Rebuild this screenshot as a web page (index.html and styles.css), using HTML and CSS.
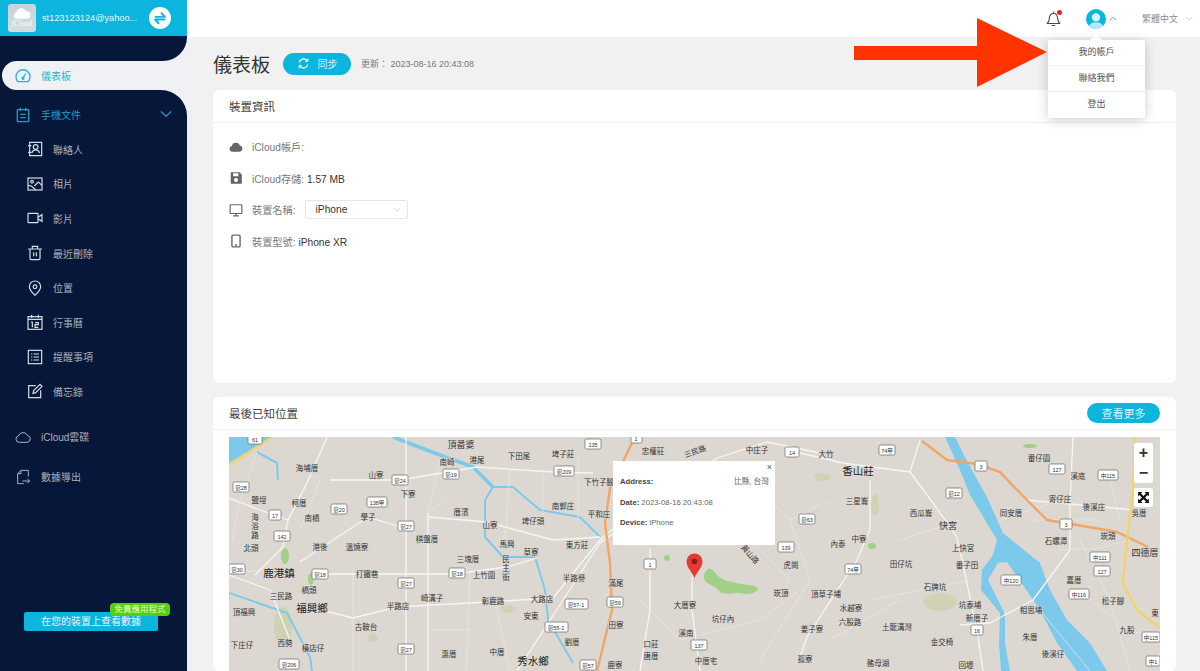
FILE: index.html
```html
<!DOCTYPE html>
<html lang="zh-Hant">
<head>
    <meta charset="UTF-8">
    <meta name="viewport" content="width=device-width, initial-scale=1.0">
    <title>儀表板</title>
    <link rel="stylesheet" href="styles.css">
</head>
<body>
<div class="app">
    <!-- left navigation -->
    <aside class="sidebar">
        <div class="account">
            <div class="logo">
                <svg viewBox="0 0 24 14" class="logo-cloud"><path d="M6 13a4 4 0 0 1-.6-7.9A6 6 0 0 1 16.8 4 4.6 4.6 0 0 1 18.6 13z" fill="#fff"/></svg>
                <span class="logo-text">iCloud</span>
            </div>
            <span class="account-mail">st123123124@yahoo...</span>
            <span class="swap">
                <svg viewBox="0 0 24 24" fill="none" stroke="#0bb5de" stroke-width="2.6" stroke-linejoin="round" stroke-linecap="round"><path d="M6 10.5h12.5L14 5.5"/><path d="M18 14H5.5l4.5 5"/></svg>
            </span>
        </div>
        <div class="nav-top"></div>
        <div class="nav-active-wrap">
            <a class="nav-active">
                <svg class="icon" viewBox="0 0 24 24" fill="none" stroke="currentColor" stroke-width="2"><path d="M4.5 20.5A10.5 10.5 0 1 1 19.5 20.5z" stroke-linejoin="round"/><path d="M12 15l3.5-6" stroke-linecap="round"/><circle cx="12" cy="15.5" r="1.5" fill="currentColor"/></svg>
                儀表板
            </a>
        </div>
        <nav class="nav">
            <a class="nav-group">
                <svg class="icon" viewBox="0 0 24 24" fill="none" stroke="currentColor" stroke-width="2"><rect x="3.5" y="4" width="17" height="18" rx="1"/><path d="M8 1v5M16 1v5M8 11h8M8 16h8"/></svg>
                手機文件
                <svg class="chevron" viewBox="0 0 12 8" fill="none" stroke="currentColor" stroke-width="1.2"><path d="M1 1.5l5 5 5-5"/></svg>
            </a>
            <a class="nav-sub">
                <svg class="icon" viewBox="0 0 24 24" fill="none" stroke="currentColor" stroke-width="1.8"><path d="M4 2h18v20H4zM1.5 7h5M1.5 17h5"/><circle cx="13" cy="9" r="3.5"/><path d="M7 18c1-3.5 3-4.5 6-4.5s5 1 6 4.5"/></svg>
                聯絡人
            </a>
            <a class="nav-sub">
                <svg class="icon" viewBox="0 0 24 24" fill="none" stroke="currentColor" stroke-width="1.8"><rect x="1.5" y="3" width="21" height="18"/><circle cx="7.5" cy="8.5" r="2"/><path d="M1.5 14l5 1 7 6M11 15l6-6 5.5 5"/></svg>
                相片
            </a>
            <a class="nav-sub">
                <svg class="icon" viewBox="0 0 24 24" fill="none" stroke="currentColor" stroke-width="1.8"><rect x="1.5" y="5" width="15" height="14" rx="1"/><path d="M16.5 11l6-4v10l-6-4"/></svg>
                影片
            </a>
            <a class="nav-sub">
                <svg class="icon" viewBox="0 0 24 24" fill="none" stroke="currentColor" stroke-width="1.8"><path d="M1.5 6h21M8 6V2h8v4M4.5 6v14a2 2 0 0 0 2 2h11a2 2 0 0 0 2-2V6M10 11v6M14 11v6"/></svg>
                最近刪除
            </a>
            <a class="nav-sub">
                <svg class="icon" viewBox="0 0 24 24" fill="none" stroke="currentColor" stroke-width="1.8"><path d="M12 23C7 18 3.5 14 3.5 10a8.5 8.5 0 0 1 17 0c0 4-3.5 8-8.5 13z"/><circle cx="12" cy="10" r="2.8"/></svg>
                位置
            </a>
            <a class="nav-sub">
                <svg class="icon" viewBox="0 0 24 24" fill="none" stroke="currentColor" stroke-width="1.8"><rect x="1.5" y="4" width="21" height="19"/><path d="M7 1v5M17 1v5M1.5 8h21"/><path d="M6 12h2v8M12 13h5v3h-5v4h5"/></svg>
                行事曆
            </a>
            <a class="nav-sub">
                <svg class="icon" viewBox="0 0 24 24" fill="none" stroke="currentColor" stroke-width="1.8"><rect x="2" y="2" width="20" height="20"/><path d="M10 7.5h8M10 12h8M10 16.5h8M6 7.5h2M6 12h2M6 16.5h2"/></svg>
                提醒事項
            </a>
            <a class="nav-sub">
                <svg class="icon" viewBox="0 0 24 24" fill="none" stroke="currentColor" stroke-width="1.8"><path d="M13 4H2.5v18h18V11"/><path d="M9 15.5l1-4L19.5 2l3 3-9.5 9.5z"/></svg>
                備忘錄
            </a>
            <a class="nav-item nav-cloud">
                <svg class="icon" viewBox="0 0 24 24" fill="none" stroke="currentColor" stroke-width="1.5"><path d="M6.5 20a5 5 0 0 1-1-9.9A7 7 0 0 1 18.5 9.5 5.3 5.3 0 0 1 18 20z"/></svg>
                iCloud雲碟
            </a>
            <a class="nav-item">
                <svg class="icon" viewBox="0 0 24 24" fill="none" stroke="currentColor" stroke-width="1.5"><path d="M20 11V2H9L4 7v15h9M9 2v5H4"/><path d="M11 18h11M18.5 14.5L22 18l-3.5 3.5"/></svg>
                數據導出
            </a>
            <div class="promo">
                <span class="promo-badge">免費應用程式</span>
                <a class="promo-btn">在您的裝置上查看數據</a>
            </div>
        </nav>
    </aside>

    <div class="content">
        <header class="topbar">
            <span class="bell">
                <svg viewBox="0 0 24 24" fill="none" stroke="#4a4a4a" stroke-width="1.5"><path d="M3 19c2-1.5 2.8-3 3-6.5C6.3 7.5 8.5 5 12 5s5.700 2.500 6 7.500c.2 3.500 1 5 3 6.500z" stroke-linejoin="round"/><path d="M9.5 22h5M12 2v3"/></svg>
                <i class="bell-dot"></i>
            </span>
            <span class="avatar">
                <svg viewBox="0 0 24 24"><circle cx="12" cy="12" r="12" fill="#0bb5de"/><circle cx="12" cy="10" r="5" fill="#d9f3fa"/><path d="M3.5 20.500c2-3.500 5-4.500 8.500-4.500s6.500 1 8.500 4.500A12 12 0 0 1 3.500 20.500z" fill="#b5e8f5"/></svg>
            </span>
            <svg class="caret-up" viewBox="0 0 12 8" fill="none" stroke="#0bb5de" stroke-width="1.1"><path d="M1 6.5l5-5 5 5"/></svg>
            <span class="lang">繁體中文</span>
            <svg class="caret-down" viewBox="0 0 12 8" fill="none" stroke="#c4c4c4" stroke-width="1.1"><path d="M1 1.5l5 5 5-5"/></svg>
        </header>

        <main class="page">
            <div class="page-head">
                <h1>儀表板</h1>
                <button class="sync">
                    <svg viewBox="0 0 24 24" fill="none" stroke="#fff" stroke-width="2.4"><path d="M4 10a8.500 8.500 0 0 1 15-3M20 14a8.500 8.500 0 0 1-15 3"/><path d="M20 3v5h-5M4 21v-5h5" stroke-width="1.8"/></svg>
                    同步
                </button>
                <span class="updated">更新： 2023-08-16 20:43:08</span>
            </div>

            <section class="card card-device">
                <h2 class="card-title">裝置資訊</h2>
                <div class="device-rows">
                    <div class="device-row">
                        <svg class="row-icon" viewBox="0 0 24 24" fill="#666"><path d="M6 20a5 5 0 0 1-1-9.9A7 7 0 0 1 18.5 9.5 5.3 5.3 0 0 1 18 20z"/></svg>
                        <span>iCloud帳戶:</span>
                    </div>
                    <div class="device-row">
                        <svg class="row-icon" viewBox="0 0 24 24" fill="#666"><path d="M3 2h15l4 4v16H3zM7 4v5h9V4zM12 12a3.5 3.5 0 1 0 0 7 3.5 3.5 0 0 0 0-7z" fill-rule="evenodd"/></svg>
                        <span>iCloud存儲: <b>1.57 MB</b></span>
                    </div>
                    <div class="device-row">
                        <svg class="row-icon" viewBox="0 0 24 24" fill="none" stroke="#666" stroke-width="2"><rect x="2" y="3" width="20" height="15" rx="1"/><path d="M12 18v4M7 22h10"/></svg>
                        <span>裝置名稱:</span>
                        <span class="select">iPhone
                            <svg viewBox="0 0 12 8" fill="none" stroke="#c8c8c8"><path d="M1 1.5l5 5 5-5"/></svg>
                        </span>
                    </div>
                    <div class="device-row">
                        <svg class="row-icon" viewBox="0 0 24 24" fill="none" stroke="#666" stroke-width="2.4"><rect x="5" y="2" width="14" height="20" rx="2"/><path d="M10 19h4"/></svg>
                        <span>裝置型號: <b>iPhone XR</b></span>
                    </div>
                </div>
            </section>

            <section class="card card-map">
                <div class="card-title map-title">
                    最後已知位置
                    <button class="more">查看更多</button>
                </div>
                <div class="map">
                    <svg class="map-canvas" viewBox="229 437 931 234" preserveAspectRatio="xMinYMin slice">
                        <!-- farmland patches -->
                        <g class="parks">
                            <ellipse cx="940" cy="602" rx="17" ry="9"/>
                            <ellipse cx="283" cy="627" rx="9" ry="20"/>
                            <ellipse cx="285" cy="556" rx="4" ry="8" class="bright"/>
                            <ellipse cx="311" cy="579" rx="3" ry="6" class="bright"/>
                            <ellipse cx="508" cy="609" rx="8" ry="4"/>
                            <ellipse cx="373" cy="638" rx="5" ry="4"/>
                            <ellipse cx="875" cy="505" rx="4" ry="11"/>
                            <ellipse cx="822" cy="477" rx="8" ry="4"/>
                            <ellipse cx="1030" cy="446" rx="7" ry="2" class="bright"/>
                            <ellipse cx="872" cy="546" rx="4" ry="3" class="bright"/>
                            <ellipse cx="667" cy="558" rx="3" ry="3" class="bright"/>
                            <path class="bright" d="M708 569C704 572 702 578 706 582 711 586 716 586 720 592 728 596 736 591 745 594 752 594 758 592 758 588 752 584 742 585 733 582 726 582 720 578 716 574 714 571 711 568 708 569Z"/>
                        </g>
                        <!-- water -->
                        <path class="water" d="M229 437H273Q250 450 229 463Z"/>
                        <path class="water" d="M945 437L960 470 970 495 997 540 993 555 982 570 981 590 1000 613 999 643 1001 671H1010L1005 643 1004 612 988 580 998 563 1007 562 1040 610 1057 643 1077 671H1107L1090 643 1067 620 1050 590 1040 563 1003 533 987 497 970 467 955 437Z"/>
                        <g class="canal">
                            <path class="canal-wide" d="M393 437L440 455 473 467 493 487"/>
                            <path d="M493 487H513L540 510 580 517 600 537"/>
                            <path d="M493 487L485 500V537L503 557H535L545 590 548 620 573 663"/>
                            <path d="M229 593L287 613 310 657 312 671"/>
                            <path d="M257 452L277 463 278 480"/>
                            <path d="M1004 615V671"/>
                        </g>
                        <!-- roads -->
                        <g class="roads-minor">
                            <path d="M229 574L260 570 290 572M320 480L300 530M257 452L240 500 232 540"/>
                            <path d="M353 574V671M470 574L466 671M495 602L510 671M428 630H470"/>
                            <path d="M445 500L428 513 440 460M543 517V470M510 470L505 540M578 456V520"/>
                            <path d="M640 470L680 490 730 520 790 580M640 600L680 640 760 620 800 590M620 640L650 671"/>
                            <path d="M740 470L790 520 830 500M790 520L810 580 760 660"/>
                            <path d="M870 600L920 590 970 580M830 640L900 600M900 540L960 520M1000 520L1060 500"/>
                            <path d="M1110 480L1120 520M1080 540L1110 600 1130 671M1090 600L1130 630 1160 640"/>
                            <path d="M1057 550L1100 548 1130 540M1027 520L1100 520M1040 610L1090 671"/>
                        </g>
                        <g class="roads">
                            <path d="M229 498L260 510 288 520 307 483 327 437"/>
                            <path d="M288 520L283 547 255 575M368 517L300 562"/>
                            <path d="M313 608L353 618 397 607 487 602 553 598 600 540 620 523"/>
                            <path d="M320 574H453L507 567 537 558"/>
                            <path d="M406 437V671M428 513V671"/>
                            <path d="M368 517L400 527M428 517L487 522 553 540 600 537"/>
                            <path d="M330 480H400L477 467 553 472 593 473"/>
                            <path d="M517 671L600 543 717 458 767 442 820 453"/>
                            <path d="M800 453L843 463 910 472 933 503 957 537 977 630 983 671"/>
                            <path d="M920 440L910 472"/>
                            <path d="M870 480V530L857 560 807 637 800 657"/>
                            <path d="M692 577V610L700 671"/>
                            <path d="M1073 437L1070 503V550L1033 600 990 623 960 625"/>
                            <path d="M1027 500L1133 510M650 548L650 610 640 671"/>
                            <path d="M229 575L270 590 290 640"/>
                        </g>
                        <path class="highway" d="M640 437L632 443 610 488 605 523 610 563 612 610 597 671"/>
                        <path class="highway" d="M922 441L947 460 977 464 1000 472 1020 493 1047 520 1077 525 1117 532 1148 547"/>
                        <path class="expressway" d="M1135 437L1133 490 1128 530 1123 583 1137 610 1160 628"/>
                        <path class="expressway thin" d="M229 465L260 445 272 437"/>

                        <!-- place names -->
                        <g class="places">
                            <text x="461" y="448" class="big">頂番婆</text><text x="519" y="459">下田尾</text><text x="563" y="457">埤子莊</text><text x="447" y="465">南崎</text><text x="477" y="463">港尾</text><text x="307" y="471">海埔厝</text><text x="376" y="478">山寮</text><text x="599" y="485">下竹子腳</text><text x="408" y="497">下寮</text><text x="259" y="503">鹽埕</text><text x="299" y="506">柯厝</text><text x="312" y="521">南橋</text><text x="368" y="520">學子</text><text x="461" y="515">厝濱</text><text x="563" y="509">南郭庄</text><text x="599" y="517">平和庄</text><text x="490" y="528">山寮</text><text x="533" y="524">埤仔頭</text><text x="427" y="542">棋盤厝</text><text x="320" y="550">港後</text><text x="357" y="550">溫燒寮</text><text x="507" y="547">馬興</text><text x="577" y="548">東方莊</text><text x="251" y="551">北頭</text><text x="531" y="555">草寮</text><text x="468" y="562">三塊厝</text>
                            <text x="279" y="577" class="town">鹿港鎮</text><text x="367" y="577">打鐵巷</text><text x="484" y="578">上竹圍</text><text x="574" y="581">半路譽</text><text x="309" y="593">橋頭</text><text x="281" y="599">三民路</text><text x="432" y="601">崎溝子</text><text x="542" y="602">大路店</text><text x="493" y="604">彰鹿路</text><text x="398" y="609">半路店</text><text x="312" y="612" class="town">福興鄉</text><text x="244" y="615">頂福興</text><text x="531" y="619">安東</text><text x="366" y="630">古鞍台</text><text x="572" y="645">劉厝</text><text x="242" y="648">下庄仔</text><text x="285" y="646">西勢</text><text x="313" y="651">橫店仔</text><text x="497" y="655">中厝</text><text x="449" y="657">惠厝</text><text x="533" y="665" class="town">秀水鄉</text><text x="615" y="668">鹿寮</text>
                            <text x="255" y="520">海</text><text x="255" y="529">浴</text><text x="255" y="538">路</text><text x="506" y="562">民</text><text x="506" y="571">主</text><text x="506" y="580">街</text>
                            <text x="653" y="454">忠權莊</text><text x="757" y="453">中庄子</text><text x="791" y="568">虎崗</text><text x="616" y="586">滿尾</text><text x="685" y="608">大厝寮</text><text x="781" y="596">崁頂</text><text x="616" y="628">田寮</text><text x="723" y="622">坑仔內</text><text x="686" y="636">溪南</text><text x="651" y="647">口莊</text><text x="651" y="659">唐厝</text><text x="706" y="664">中厝宅</text>
                            <text transform="translate(696 454) rotate(-20)">三民路</text><text transform="translate(748 556) rotate(50)">黃山路</text>
                            <text x="826" y="457">大竹</text><text x="858" y="475" class="town">香山莊</text><text x="1039" y="461">番仔園</text><text x="1078" y="479">溪底</text><text x="857" y="504">三星崙</text><text x="921" y="516">西瓜崙</text><text x="1060" y="502">寄仔庄</text><text x="1094" y="510">後溪庄</text><text x="1011" y="516">同安厝</text><text x="1139" y="516">吳厝</text><text x="948" y="529" class="big">快宮</text><text x="1108" y="539">崁頭</text><text x="1056" y="544">石螺潭</text><text x="838" y="547">內泰</text><text x="859" y="542">中寮</text><text x="963" y="551">上快宮</text><text x="1145" y="556" class="big">四德厝</text><text x="967" y="568">番子田</text><text x="901" y="567">田仔坑</text><text x="1074" y="583">嘉厝</text><text x="935" y="590">石牌坑</text><text x="826" y="597">頂草子埔</text><text x="1113" y="604">松子腳</text><text x="970" y="608">坑泰埔</text><text x="851" y="611">水越寮</text><text x="1031" y="613">相思埔</text><text x="977" y="621">新厝子</text><text x="850" y="625">六股路</text><text x="897" y="630">土龍溝灣</text><text x="1127" y="633">九股</text><text x="812" y="632">姜子寮</text><text x="1030" y="640">朱厝</text><text x="942" y="645">金交椅</text><text x="1053" y="657">後溪仔</text><text x="805" y="662">孤寮</text><text x="878" y="666">豬母湖</text><text x="966" y="668">回壢</text><text x="1155" y="616">東</text>
                        </g>

                        <!-- road number shields -->
                        <g class="shields">
                            <rect x="248" y="434" width="14" height="10"/><text x="255" y="442">61</text>
                            <rect x="585" y="439" width="16" height="10"/><text x="593" y="447">135</text>
                            <rect x="233" y="482" width="16" height="10"/><text x="241" y="490">彰28</text>
                            <rect x="392" y="475" width="16" height="10"/><text x="400" y="483">彰24</text>
                            <rect x="443" y="469" width="16" height="10"/><text x="451" y="477">彰19</text>
                            <rect x="554" y="466" width="20" height="10"/><text x="564" y="474">彰209</text>
                            <rect x="269" y="510" width="12" height="10"/><text x="275" y="518">17</text>
                            <rect x="331" y="504" width="16" height="10"/><text x="339" y="512">彰20</text>
                            <rect x="367" y="497" width="20" height="10"/><text x="377" y="505">138甲</text>
                            <rect x="274" y="531" width="16" height="10"/><text x="282" y="539">142</text>
                            <rect x="398" y="521" width="16" height="10"/><text x="406" y="529">彰27</text>
                            <rect x="229" y="564" width="16" height="10"/><text x="237" y="572">彰30</text>
                            <rect x="312" y="569" width="16" height="10"/><text x="320" y="577">彰18</text>
                            <rect x="449" y="568" width="16" height="10"/><text x="457" y="576">彰18</text>
                            <rect x="398" y="578" width="16" height="10"/><text x="406" y="586">彰27</text>
                            <rect x="565" y="599" width="23" height="10"/><text x="576" y="607">彰57-1</text>
                            <rect x="607" y="597" width="16" height="10"/><text x="615" y="605">彰59</text>
                            <rect x="545" y="622" width="23" height="10"/><text x="556" y="630">彰55-2</text>
                            <rect x="398" y="644" width="16" height="10"/><text x="406" y="652">彰27</text>
                            <rect x="279" y="659" width="20" height="10"/><text x="289" y="667">彰206</text>
                            <rect x="580" y="660" width="16" height="10"/><text x="588" y="668">彰57</text>
                            <rect x="631" y="433" width="11" height="10"/><text x="636" y="441">1</text>
                            <rect x="785" y="447" width="14" height="10"/><text x="792" y="455">14</text>
                            <rect x="799" y="514" width="16" height="10"/><text x="807" y="522">彰63</text>
                            <rect x="778" y="542" width="16" height="10"/><text x="786" y="550">139</text>
                            <rect x="644" y="559" width="12" height="10"/><text x="650" y="567">1</text>
                            <rect x="691" y="640" width="16" height="10"/><text x="699" y="648">137</text>
                            <rect x="879" y="445" width="16" height="10"/><text x="887" y="453">74甲</text>
                            <rect x="975" y="461" width="12" height="10"/><text x="981" y="469">3</text>
                            <rect x="1049" y="464" width="16" height="10"/><text x="1057" y="472">127</text>
                            <rect x="1098" y="470" width="20" height="10"/><text x="1108" y="478">中115</text>
                            <rect x="946" y="488" width="16" height="10"/><text x="954" y="496">彰12</text>
                            <rect x="1060" y="519" width="12" height="10"/><text x="1066" y="527">3</text>
                            <rect x="1090" y="552" width="20" height="10"/><text x="1100" y="560">中111</text>
                            <rect x="1094" y="566" width="16" height="10"/><text x="1102" y="574">127</text>
                            <rect x="845" y="564" width="16" height="10"/><text x="853" y="572">74甲</text>
                            <rect x="1001" y="575" width="20" height="10"/><text x="1011" y="583">中120</text>
                            <rect x="1069" y="589" width="20" height="10"/><text x="1079" y="597">中116</text>
                            <rect x="971" y="625" width="12" height="10"/><text x="977" y="633">16</text>
                            <rect x="1142" y="632" width="18" height="10"/><text x="1151" y="640">中115</text>
                            <rect x="1146" y="656" width="14" height="10"/><text x="1153" y="664">中1</text>
                        </g>

                        <!-- device pin -->
                        <path class="pin" d="M694.5 578C692 571 686.5 568 686.5 561.5a8 8 0 0 1 16 0C702.5 568 697 571 694.5 578z"/>
                        <circle class="pin-dot" cx="694.5" cy="561.5" r="2.800"/>
                    </svg>

                    <div class="popup">
                        <span class="popup-close">×</span>
                        <p class="popup-address"><b>Address:</b><span>比縣, 台灣</span></p>
                        <p><b>Date:</b> 2023-08-16 20:43:08</p>
                        <p><b>Device:</b> iPhone</p>
                    </div>

                    <div class="map-controls">
                        <div class="zoom-box">
                            <span class="zoom-btn">+</span>
                            <span class="zoom-btn">−</span>
                        </div>
                        <span class="fullscreen">
                            <svg viewBox="0 0 24 24" fill="#111"><path d="M2 2h8L7.5 4.5 12 9l4.500-4.500L14 2h8v8l-2.500-2.500L15 12l4.500 4.500L22 14v8h-8l2.500-2.500L12 15l-4.500 4.500L10 22H2v-8l2.500 2.500L9 12 4.500 7.500 2 10z"/></svg>
                        </span>
                    </div>
                </div>
            </section>
        </main>
    </div>

    <!-- account dropdown, open -->
    <div class="dropdown">
        <a>我的帳戶</a>
        <a>聯絡我們</a>
        <a>登出</a>
    </div>

    <!-- red callout arrow -->
    <svg class="callout" viewBox="0 0 193 69"><path d="M0 28h123V0l70 34-70 35V42H0z" fill="#ff3300"/></svg>
</div>
</body>
</html>
```

FILE: styles.css
```css
* {
    box-sizing: border-box;
}
body {
    margin: 0;
    font-family: "Liberation Sans", "Noto Sans CJK TC", sans-serif;
    color: #333;
    background: #f1f1f1;
}
a {
    text-decoration: none;
}
.app {
    position: relative;
    display: flex;
    height: 100vh;
    overflow: hidden;
}

/* sidebar */
.sidebar {
    width: 187px;
    flex-shrink: 0;
    display: flex;
    flex-direction: column;
    background: #f0f1f4;
}
.account {
    height: 36px;
    padding-left: 8px;
    display: flex;
    align-items: center;
    background: #0bb5de;
}
.logo {
    position: relative;
    width: 28px;
    height: 28px;
    border-radius: 3px;
    background: linear-gradient(#c4d4da, #d4dee2);
    overflow: hidden;
}
.logo-cloud {
    display: block;
    width: 20px;
    margin: 4px auto 0;
}
.logo-text {
    display: block;
    font-family: "Liberation Serif", serif;
    font-size: 7.5px;
    line-height: 8px;
    text-align: center;
    color: #fff;
}
.account-mail {
    margin-left: 6px;
    width: 101px;
    font-size: 9.2px;
    color: #e6f8fc;
    white-space: nowrap;
}
.swap {
    margin-left: 6px;
    width: 22px;
    height: 22px;
    border-radius: 50%;
    background: #fff;
    display: flex;
    align-items: center;
    justify-content: center;
}
.swap svg {
    width: 18px;
}
.nav-top {
    height: 25px;
    background: #06173a;
    border-bottom-right-radius: 24px;
}
.nav-active-wrap {
    padding-left: 2px;
    background: linear-gradient(90deg, #06173a 16px, #f0f1f4 16px);
}
.nav-active {
    height: 29px;
    padding-left: 13px;
    display: flex;
    align-items: center;
    gap: 10px;
    font-size: 10px;
    color: #28b5d8;
    background: #f0f1f4;
    border-radius: 15px 0 0 15px;
}
.nav {
    flex: 1;
    position: relative;
    padding-top: 7px;
    background: #06173a;
    border-top-right-radius: 26px;
    color: #aab1be;
    font-size: 10px;
}
.icon {
    width: 16px;
    height: 16px;
    flex-shrink: 0;
}
.nav a {
    display: flex;
    align-items: center;
    color: inherit;
}
.nav .nav-group {
    position: relative;
    height: 35px;
    padding-left: 15px;
    gap: 10px;
    color: #1c9fc4;
}
.chevron {
    position: absolute;
    right: 15px;
    top: 13px;
    width: 12px;
}
.nav .nav-sub {
    height: 34.6px;
    padding-left: 27px;
    gap: 10px;
}
.nav-sub .icon {
    color: #d5dbe6;
}
.nav .nav-item {
    height: 40px;
    padding-left: 15px;
    gap: 10px;
}
.nav .nav-cloud {
    margin-top: 8px;
}
.promo {
    position: absolute;
    left: 24px;
    bottom: 40px;
    width: 146px;
}
.nav .promo-btn {
    display: block;
    width: 134px;
    height: 19px;
    border-radius: 2px;
    background: #0bb5de;
    color: #e4f6fb;
    font-size: 10px;
    line-height: 19px;
    text-align: center;
}
.promo-badge {
    position: absolute;
    right: 0;
    top: -9px;
    width: 60px;
    height: 13px;
    border-radius: 4px;
    background: #55d010;
    color: #e8fbd8;
    font-size: 8.5px;
    line-height: 13px;
    text-align: center;
}

/* top bar */
.content {
    flex: 1;
    min-width: 0;
    display: flex;
    flex-direction: column;
}
.topbar {
    height: 37px;
    flex-shrink: 0;
    padding-right: 7px;
    display: flex;
    align-items: center;
    justify-content: flex-end;
    background: #fff;
}
.bell {
    position: relative;
    width: 17px;
    height: 17px;
    margin-right: 24px;
}
.bell-dot {
    position: absolute;
    right: 0;
    top: 0;
    width: 5px;
    height: 5px;
    border-radius: 50%;
    background: #e8202a;
}
.avatar {
    width: 20px;
    height: 20px;
}
.caret-up {
    width: 8px;
    margin-left: 3px;
    margin-right: 25px;
}
.lang {
    font-size: 9px;
    color: #8c8c8c;
}
.caret-down {
    width: 8px;
    margin-left: 7px;
}

/* page body */
.page {
    flex: 1;
    padding: 0 24px 0 26px;
    overflow: hidden;
}
.page-head {
    height: 53px;
    display: flex;
    align-items: center;
}
.page-head h1 {
    margin: 0;
    font-size: 19px;
    font-weight: 400;
    color: #333;
}
.sync {
    margin-left: 13px;
    width: 68px;
    height: 22px;
    padding: 0;
    border: none;
    border-radius: 11px;
    background: #0bb5de;
    color: #d8f4fb;
    font-family: inherit;
    font-size: 10px;
    display: flex;
    align-items: center;
    justify-content: center;
    gap: 8px;
}
.sync svg {
    width: 13px;
}
.updated {
    margin-left: 10px;
    font-size: 9px;
    color: #777;
}
.card {
    background: #fff;
    border-radius: 6px;
}
.card-device {
    height: 293px;
    margin-bottom: 14px;
}
.card-title {
    margin: 0;
    height: 33px;
    padding-left: 16px;
    display: flex;
    align-items: center;
    border-bottom: 1px solid #eee;
    font-size: 11.5px;
    font-weight: 400;
    color: #444;
}
.device-rows {
    padding: 8px 0 0 16px;
}
.device-row {
    height: 31.5px;
    display: flex;
    align-items: center;
    gap: 9px;
    font-size: 10.2px;
    color: #777;
}
.device-row b {
    font-weight: 400;
    color: #333;
}
.row-icon {
    width: 14px;
    height: 14px;
}
.select {
    position: relative;
    width: 103px;
    height: 19px;
    padding-left: 10px;
    border: 1px solid #e6e6e6;
    border-radius: 2px;
    line-height: 17px;
    color: #333;
}
.select svg {
    position: absolute;
    right: 6px;
    top: 6px;
    width: 8px;
}
.map-title {
    justify-content: space-between;
    padding-right: 16px;
}
.more {
    width: 73px;
    height: 20px;
    padding: 0;
    border: none;
    border-radius: 10px;
    background: #0bb5de;
    color: #d8f4fb;
    font-family: inherit;
    font-size: 11px;
}

/* map */
.map {
    position: relative;
    height: 234px;
    margin: 7px 16px 0;
    background: #dcd8d1;
    overflow: hidden;
}
.map-canvas {
    display: block;
    width: 931px;
    height: 234px;
}
.parks {
    fill: #d0d2b4;
}
.parks .bright {
    fill: #a3d087;
}
.water {
    fill: #7dc9ec;
}
.canal,
.roads,
.roads-minor,
.highway,
.expressway {
    fill: none;
    stroke-linejoin: round;
}
.canal {
    stroke: #7dc9ec;
    stroke-width: 2;
}
.canal-wide {
    stroke-width: 3.5;
}
.roads {
    stroke: #f7f6f3;
    stroke-width: 1.3;
}
.roads-minor {
    stroke: #e8e5e0;
    stroke-width: 0.8;
}
.highway {
    stroke: #f2a564;
    stroke-width: 2.4;
}
.expressway {
    stroke: #f2d36a;
    stroke-width: 2.4;
}
.places text {
    font-size: 7.5px;
    fill: #333;
    text-anchor: middle;
    stroke: #dcd8d1;
    stroke-width: 1.2px;
    paint-order: stroke;
}
.places .big {
    font-size: 9px;
}
.places .town {
    font-size: 10.5px;
    fill: #222;
}
.shields rect {
    fill: #fff;
    stroke: #666;
    stroke-width: 0.7;
    rx: 1.5px;
}
.shields text {
    font-size: 5.5px;
    fill: #333;
    text-anchor: middle;
}
.pin {
    fill: #e53935;
}
.pin-dot {
    fill: #8c1c13;
}
.popup {
    position: absolute;
    left: 384px;
    top: 24px;
    width: 162px;
    height: 84px;
    padding: 16px 6px 0 7px;
    background: #fff;
    font-size: 7.7px;
    color: #666;
}
.popup p {
    margin: 0 0 11.5px;
    line-height: 9px;
}
.popup b {
    color: #444;
}
.popup-address {
    display: flex;
    justify-content: space-between;
}
.popup-close {
    position: absolute;
    right: 3px;
    top: 1px;
    font-size: 9px;
    color: #555;
}
.map-controls {
    position: absolute;
    right: 7px;
    top: 6px;
    width: 19px;
    display: flex;
    flex-direction: column;
    gap: 5px;
}
.zoom-box {
    background: #fff;
    border-radius: 2px;
}
.zoom-btn {
    display: block;
    height: 20px;
    font-size: 16px;
    font-weight: 700;
    line-height: 20px;
    text-align: center;
    color: #333;
}
.fullscreen {
    height: 19px;
    padding: 3px;
    background: #fff;
    border-radius: 2px;
}
.fullscreen svg {
    display: block;
}

/* overlays */
.dropdown {
    position: absolute;
    left: 1048px;
    top: 40px;
    width: 97px;
    background: #fff;
    border-radius: 2px;
    box-shadow: 0 2px 12px rgba(0, 0, 0, 0.2);
}
.dropdown::before {
    content: "";
    position: absolute;
    left: 42px;
    top: -6px;
    border: 6px solid transparent;
    border-top: none;
    border-bottom-color: #fff;
}
.dropdown a {
    display: block;
    height: 26px;
    border-bottom: 1px solid #eee;
    font-size: 9px;
    line-height: 25px;
    text-align: center;
    color: #555;
}
.dropdown a:last-child {
    border-bottom: none;
}
.callout {
    position: absolute;
    left: 854px;
    top: 18px;
    width: 193px;
    height: 69px;
}
```
